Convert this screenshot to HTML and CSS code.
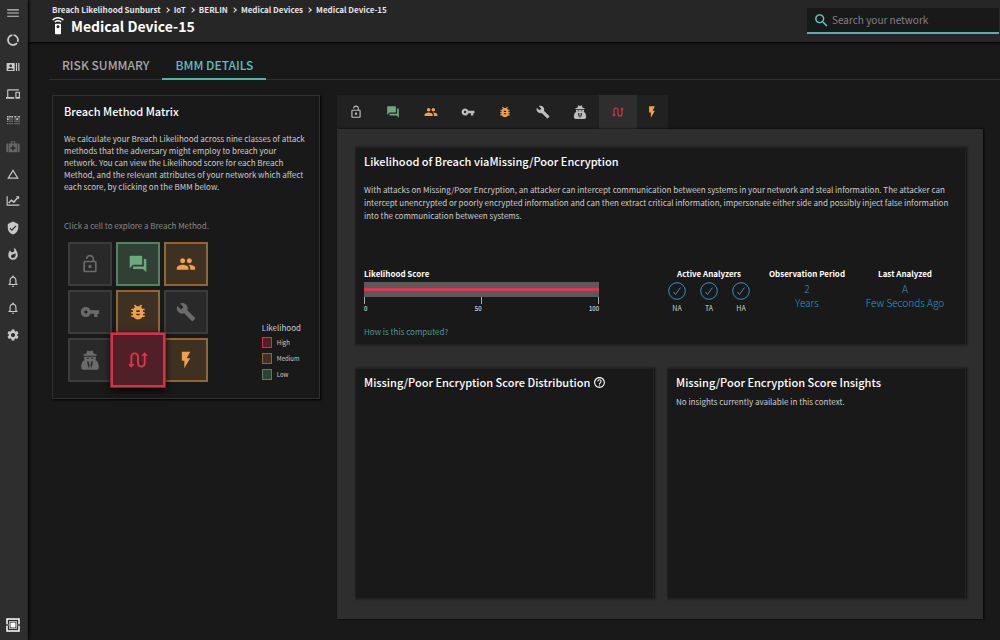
FILE: index.html
```html
<!DOCTYPE html>
<html lang="en">
<head>
    <meta charset="UTF-8">
    <meta name="viewport" content="width=device-width, initial-scale=1.0">
    <title>Medical Device-15</title>
    <link rel="stylesheet" href="styles.css">
</head>
<body>
    <!-- Icon set -->
    <svg class="sprite" aria-hidden="true">
        <symbol id="menu" viewBox="0 0 24 24"><path d="M2 18.500h20v-2H2v2zm0-5.500h20v-2H2v2zm0-7.500v2h20v-2H2z"/></symbol>
        <symbol id="usage" viewBox="0 0 24 24"><path d="M13 2.050v3.030c3.390.49 6 3.390 6 6.920 0 .9-.18 1.750-.48 2.540l2.600 1.530c.56-1.240.88-2.620.88-4.070 0-5.180-3.950-9.450-9-9.950zM12 19c-3.870 0-7-3.130-7-7 0-3.530 2.610-6.430 6-6.920V2.050c-5.060.5-9 4.760-9 9.950 0 5.520 4.470 10 9.990 10 3.310 0 6.240-1.610 8.060-4.090l-2.600-1.530C16.170 17.980 14.210 19 12 19z"/></symbol>
        <symbol id="actors" viewBox="0 0 24 24"><path d="M21 5v14h2V5h-2zm-4 14h2V5h-2v14zM14 5H2c-.55 0-1 .45-1 1v12c0 .55.45 1 1 1h12c.55 0 1-.45 1-1V6c0-.55-.45-1-1-1zM8 7.750c1.240 0 2.250 1.010 2.250 2.250S9.240 12.250 8 12.250 5.750 11.240 5.750 10 6.760 7.750 8 7.750zM12.500 17h-9v-.75c0-1.500 3-2.250 4.500-2.250s4.500.75 4.500 2.250V17z"/></symbol>
        <symbol id="devices" viewBox="0 0 24 24"><path d="M4 6h18V4H4c-1.100 0-2 .9-2 2v11H0v3h14v-3H4V6zm19 2h-6c-.55 0-1 .45-1 1v10c0 .55.45 1 1 1h6c.55 0 1-.45 1-1V9c0-.55-.45-1-1-1zm-1 9h-4v-7h4v7z"/></symbol>
        <symbol id="dots" viewBox="0 0 14 14">
            <path d="M1 3h1.600v1.600H1zM3.200 3h1.600v1.600H3.200zM5.400 3H7v1.600H5.400zM1 5.300h1.600v1.600H1zM8.300 3h1.600v1.600H8.300zM12.300 3h1.600v1.600h-1.600zM10.300 5.300h1.600v1.600h-1.600z"/>
            <path opacity=".5" d="M3.200 5.300h1.400v1.400H3.200zM5.400 5.300h1.400v1.400H5.400zM1 7.600h1.400V9H1zM3.200 7.600h1.400V9H3.200zM5.400 7.600h1.400V9H5.400zM1 9.900h1.400v1.400H1zM3.200 9.900h1.400v1.400H3.200zM5.400 9.900h1.400v1.400H5.400zM10.300 3h1.400v1.400h-1.400zM8.300 5.300h1.400v1.400H8.300zM12.300 5.300h1.400v1.400h-1.400zM8.300 7.600h1.400V9H8.300zM10.300 7.600h1.400V9h-1.400zM12.300 7.600h1.400V9h-1.400zM8.300 9.900h1.400v1.400H8.300zM10.300 9.900h1.400v1.400h-1.400zM12.300 9.900h1.400v1.400h-1.400z"/>
        </symbol>
        <symbol id="medkit" viewBox="0 0 24 24"><path fill-rule="evenodd" d="M8 6V3.500C8 2.700 8.700 2 9.500 2h5c.8 0 1.500.7 1.500 1.500V6h3v15H5V6h3zm2 0h4V4h-4v2zm.5 3.500v2.800H7.700v3h2.800v2.800h3v-2.800h2.800v-3h-2.800V9.500h-3zM2.500 6H4v15H2.500C1.200 21 .5 20 .5 19V8c0-1.100.9-2 2-2zM20 6h1.500c1.100 0 2 .9 2 2v11c0 1.100-.9 2-2 2H20V6z"/></symbol>
        <symbol id="triangle" viewBox="0 0 24 24"><path d="M12 7.770L18.390 18H5.610L12 7.770M12 4L2 20h20L12 4z"/></symbol>
        <symbol id="chart" viewBox="0 0 24 24"><path d="M1 4h2v14h20v2H1z"/><path fill="none" stroke="currentColor" stroke-width="2.500" d="M4.500 15.500l5-5 4 3.500 6.500-8"/><path d="M22.500 4v5.500L17 4z"/></symbol>
        <symbol id="shield" viewBox="0 0 24 24"><path d="M12 1L3 5v6c0 5.550 3.840 10.740 9 12 5.160-1.260 9-6.450 9-12V5l-9-4zm-2 16l-4-4 1.410-1.410L10 14.170l6.590-6.590L18 9l-8 8z"/></symbol>
        <symbol id="fire" viewBox="0 0 24 24"><path d="M13.500.67s.74 2.650.74 4.800c0 2.060-1.350 3.730-3.410 3.730-2.070 0-3.630-1.670-3.630-3.730l.03-.36C5.210 7.510 4 10.620 4 14c0 4.420 3.580 8 8 8s8-3.580 8-8C20 8.610 17.410 3.800 13.500.67zM11.710 19c-1.780 0-3.220-1.400-3.220-3.140 0-1.620 1.050-2.760 2.810-3.120 1.770-.36 3.600-1.210 4.620-2.580.39 1.290.59 2.650.59 4.040 0 2.650-2.150 4.800-4.800 4.800z"/></symbol>
        <symbol id="bell" viewBox="0 0 24 24"><path d="M12 22c1.100 0 2-.9 2-2h-4c0 1.100.9 2 2 2zm6-6v-5c0-3.070-1.630-5.640-4.500-6.320V4c0-.83-.67-1.500-1.500-1.500s-1.500.67-1.500 1.500v.68C7.640 5.360 6 7.920 6 11v5l-2 2v1h16v-1l-2-2zm-2 1H8v-6c0-2.480 1.510-4.500 4-4.500s4 2.020 4 4.500v6z"/></symbol>
        <symbol id="gear" viewBox="0 0 24 24"><path d="M19.140 12.940c.04-.3.060-.61.060-.94 0-.32-.02-.64-.07-.94l2.030-1.580c.18-.14.23-.41.120-.61l-1.920-3.320c-.12-.22-.37-.29-.59-.22l-2.390.96c-.5-.38-1.030-.7-1.620-.94l-.36-2.540c-.04-.24-.24-.41-.48-.41h-3.840c-.24 0-.43.17-.47.41l-.36 2.540c-.59.24-1.130.57-1.620.94l-2.390-.96c-.22-.08-.47 0-.59.22L2.740 8.870c-.12.21-.08.47.12.61l2.030 1.580c-.05.3-.09.63-.09.94s.02.64.07.94l-2.030 1.580c-.18.14-.23.41-.12.61l1.920 3.320c.12.22.37.29.59.22l2.390-.96c.5.38 1.030.7 1.620.94l.36 2.540c.05.24.24.41.48.41h3.840c.24 0 .44-.17.47-.41l.36-2.540c.59-.24 1.130-.56 1.620-.94l2.390.96c.22.08.47 0 .59-.22l1.920-3.320c.12-.22.07-.47-.12-.61l-2.010-1.580zM12 15.600c-1.980 0-3.600-1.620-3.600-3.600s1.620-3.600 3.600-3.600 3.600 1.620 3.600 3.600-1.620 3.600-3.600 3.600z"/></symbol>
        <symbol id="logo" viewBox="0 0 14 14"><path fill="none" stroke="currentColor" stroke-width="1.500" d="M1 6V1h12v5M1 8v5h12V8"/><path d="M3 3h8v8H3zM4 4v6h6V4z" fill-rule="evenodd" opacity=".6"/><path d="M4.500 4.500h5v5h-5z"/><path opacity=".5" d="M0 6.500h3v1H0zM11 6.500h3v1h-3z"/></symbol>
        <symbol id="remote" viewBox="0 0 24 24"><path d="M15 9H9c-.55 0-1 .45-1 1v12c0 .55.45 1 1 1h6c.55 0 1-.45 1-1V10c0-.55-.45-1-1-1zm-3 6c-1.100 0-2-.9-2-2s.9-2 2-2 2 .9 2 2-.9 2-2 2zM7.050 6.050l1.410 1.410C9.370 6.560 10.620 6 12 6s2.630.56 3.540 1.460l1.410-1.410C15.680 4.780 13.930 4 12 4s-3.680.78-4.950 2.050zM12 0C8.960 0 6.210 1.230 4.220 3.220l1.410 1.410C7.260 3.010 9.510 2 12 2s4.740 1.010 6.360 2.640l1.410-1.410C17.790 1.230 15.040 0 12 0z"/></symbol>
        <symbol id="search" viewBox="0 0 24 24"><path d="M15.500 14h-.79l-.28-.27C15.410 12.590 16 11.110 16 9.500 16 5.910 13.090 3 9.500 3S3 5.910 3 9.500 5.910 16 9.500 16c1.610 0 3.090-.59 4.230-1.570l.27.28v.79l5 4.990L20.490 19l-4.990-5zm-6 0C7.010 14 5 11.990 5 9.500S7.010 5 9.500 5 14 7.010 14 9.500 11.990 14 9.500 14z"/></symbol>
        <symbol id="lock" viewBox="0 0 24 24"><path d="M12 17c1.100 0 2-.9 2-2s-.9-2-2-2-2 .9-2 2 .9 2 2 2zm6-9h-1V6c0-2.760-2.240-5-5-5S7 3.240 7 6h1.900c0-1.710 1.390-3.100 3.100-3.100 1.710 0 3.100 1.390 3.100 3.100v2H6c-1.100 0-2 .9-2 2v10c0 1.100.9 2 2 2h12c1.100 0 2-.9 2-2V10c0-1.100-.9-2-2-2zm0 12H6V10h12v10z"/></symbol>
        <symbol id="forum" viewBox="0 0 24 24"><path d="M21 6h-2v9H6v2c0 .55.45 1 1 1h11l4 4V7c0-.55-.45-1-1-1zm-4 6V3c0-.55-.45-1-1-1H3c-.55 0-1 .45-1 1v14l4-4h10c.55 0 1-.45 1-1z"/></symbol>
        <symbol id="people" viewBox="0 0 24 24"><path d="M16 11c1.660 0 2.990-1.340 2.990-3S17.660 5 16 5c-1.660 0-3 1.340-3 3s1.340 3 3 3zm-8 0c1.660 0 2.990-1.340 2.990-3S9.660 5 8 5C6.340 5 5 6.340 5 8s1.340 3 3 3zm0 2c-2.330 0-7 1.170-7 3.500V19h14v-2.500c0-2.330-4.670-3.500-7-3.500zm8 0c-.29 0-.62.02-.97.05 1.160.84 1.970 1.970 1.970 3.450V19h6v-2.500c0-2.330-4.670-3.500-7-3.500z"/></symbol>
        <symbol id="key" viewBox="0 0 24 24"><path d="M12.650 10C11.830 7.670 9.610 6 7 6c-3.310 0-6 2.690-6 6s2.690 6 6 6c2.610 0 4.830-1.670 5.650-4H17v4h4v-4h2v-4H12.650zM7 14c-1.100 0-2-.9-2-2s.9-2 2-2 2 .9 2 2-.9 2-2 2z"/></symbol>
        <symbol id="bug" viewBox="0 0 24 24"><path d="M20 8h-2.810c-.45-.78-1.070-1.450-1.820-1.960L17 4.410 15.590 3l-2.170 2.170C12.960 5.060 12.490 5 12 5c-.49 0-.96.06-1.410.17L8.410 3 7 4.410l1.620 1.630C7.880 6.550 7.260 7.220 6.810 8H4v2h2.090c-.05.33-.09.66-.09 1v1H4v2h2v1c0 .34.04.67.09 1H4v2h2.810c1.040 1.790 2.970 3 5.190 3s4.150-1.210 5.190-3H20v-2h-2.090c.05-.33.09-.66.09-1v-1h2v-2h-2v-1c0-.34-.04-.67-.09-1H20V8zm-6 8h-4v-2h4v2zm0-4h-4v-2h4v2z"/></symbol>
        <symbol id="wrench" viewBox="0 0 24 24"><path d="M22.700 19l-9.100-9.100c.9-2.300.4-5-1.500-6.900-2-2-5-2.400-7.400-1.300L9 6 6 9 1.600 4.700C.4 7.100.9 10.100 2.900 12.100c1.900 1.900 4.600 2.400 6.900 1.500l9.100 9.100c.4.4 1 .4 1.400 0l2.300-2.300c.5-.4.5-1.100.1-1.400z"/></symbol>
        <symbol id="spy" viewBox="0 0 24 24"><path fill-rule="evenodd" d="M7.500 4.500L8.800.5 12 1.500l3.200-1 1.300 4L20 5.500V7H4V5.500l3.500-1zM5 8h14c.3 1.500 0 3-.8 4 2 .6 3 2 3.600 4 .7 2.300 1 4 .6 5.500-.4 1.500-1.400 2.300-3.100 2.300H4.700c-1.700 0-2.700-.8-3.100-2.300-.4-1.500-.1-3.200.6-5.500.6-2 1.600-3.400 3.600-4C5 11 4.700 9.500 5 8zm3 1.300v1.200h2.800V9.300H8zm5.200 0v1.200H16V9.300h-2.800zM8.500 13.500L9 17l2 5.500.4-5-.9-2 .7-1.500-2.700-.5zm7 0l-2.700.5.7 1.500-.9 2 .4 5L15 17l.5-3.500z"/></symbol>
        <symbol id="route" viewBox="0 0 24 24"><path fill="none" stroke="currentColor" stroke-width="2.200" d="M4 18V8a4 4 0 0 1 8 0v8a4 4 0 0 0 8 0V6"/><path d="M0 17h8l-4 4.200zM16 7h8l-4-4.200z"/></symbol>
        <symbol id="bolt" viewBox="0 0 24 24"><path d="M7 2v11h3v9l7-12h-4l4-8z"/></symbol>
        <symbol id="help" viewBox="0 0 24 24"><path d="M11 18h2v-2h-2v2zm1-16C6.480 2 2 6.480 2 12s4.480 10 10 10 10-4.480 10-10S17.520 2 12 2zm0 18c-4.410 0-8-3.590-8-8s3.590-8 8-8 8 3.590 8 8-3.590 8-8 8zm0-14c-2.210 0-4 1.790-4 4h2c0-1.100.9-2 2-2s2 .9 2 2c0 2-3 1.750-3 5h2c0-2.250 3-2.500 3-5 0-2.210-1.790-4-4-4z"/></symbol>
        <symbol id="check" viewBox="0 0 18 18"><circle cx="9" cy="9" r="8.300" fill="none" stroke="currentColor"/><path fill="none" stroke="currentColor" d="M5.500 10l2 2.500L12.500 5.500"/></symbol>
    </svg>

    <nav class="sidebar" aria-label="Main">
        <div class="sidebar-items">
            <button aria-label="Menu"><svg><use href="#menu"/></svg></button>
            <button aria-label="Overview"><svg><use href="#usage"/></svg></button>
            <button aria-label="Users"><svg><use href="#actors"/></svg></button>
            <button aria-label="Devices"><svg><use href="#devices"/></svg></button>
            <button aria-label="Matrix"><svg><use href="#dots"/></svg></button>
            <button class="dim" aria-label="Remediation"><svg><use href="#medkit"/></svg></button>
            <button aria-label="Risk"><svg><use href="#triangle"/></svg></button>
            <button aria-label="Trends"><svg><use href="#chart"/></svg></button>
            <button aria-label="Protection"><svg><use href="#shield"/></svg></button>
            <button aria-label="Threats"><svg><use href="#fire"/></svg></button>
            <button aria-label="Alerts"><svg><use href="#bell"/></svg></button>
            <button aria-label="Notifications"><svg><use href="#bell"/></svg></button>
            <button aria-label="Settings"><svg><use href="#gear"/></svg></button>
        </div>
        <button class="logo" aria-label="Home"><svg><use href="#logo"/></svg></button>
    </nav>

    <div class="page">
        <header class="header">
            <div>
                <nav class="breadcrumb" aria-label="Breadcrumb">
                    <a href="#">Breach Likelihood Sunburst</a><i></i><a href="#">IoT</a><i></i><a href="#">BERLIN</a><i></i><a href="#">Medical Devices</a><i></i><a href="#">Medical Device-15</a>
                </nav>
                <h1><svg><use href="#remote"/></svg>Medical Device-15</h1>
            </div>
            <label class="search">
                <svg><use href="#search"/></svg>
                <input type="text" placeholder="Search your network" aria-label="Search your network">
            </label>
        </header>

        <nav class="tabs">
            <a href="#">RISK SUMMARY</a>
            <a href="#" class="active">BMM DETAILS</a>
        </nav>

        <main class="content">
            <section class="panel matrix-panel">
                <h2>Breach Method Matrix</h2>
                <p class="intro">We calculate your Breach Likelihood across nine classes of attack methods that the adversary might employ to breach your network. You can view the Likelihood score for each Breach Method, and the relevant attributes of your network which affect each score, by clicking on the BMM below.</p>
                <p class="hint">Click a cell to explore a Breach Method.</p>
                <div class="matrix-row">
                    <div class="matrix">
                        <button class="cell" aria-label="Weak credentials"><svg><use href="#lock"/></svg></button>
                        <button class="cell low" aria-label="Phishing"><svg><use href="#forum"/></svg></button>
                        <button class="cell medium" aria-label="Trust relationship"><svg><use href="#people"/></svg></button>
                        <button class="cell" aria-label="Compromised credentials"><svg><use href="#key"/></svg></button>
                        <button class="cell medium" aria-label="Unpatched"><svg><use href="#bug"/></svg></button>
                        <button class="cell" aria-label="Misconfiguration"><svg><use href="#wrench"/></svg></button>
                        <button class="cell" aria-label="Malicious insider"><svg><use href="#spy"/></svg></button>
                        <button class="cell high selected" aria-label="Missing/Poor Encryption"><svg><use href="#route"/></svg></button>
                        <button class="cell medium" aria-label="Zero day"><svg><use href="#bolt"/></svg></button>
                    </div>
                    <div class="legend">
                        <h3>Likelihood</h3>
                        <ul>
                            <li><span class="swatch high"></span>High</li>
                            <li><span class="swatch medium"></span>Medium</li>
                            <li><span class="swatch low"></span>Low</li>
                        </ul>
                    </div>
                </div>
            </section>

            <div class="details">
                <div class="icon-tabs">
                    <button aria-label="Weak credentials"><svg><use href="#lock"/></svg></button>
                    <button class="green" aria-label="Phishing"><svg><use href="#forum"/></svg></button>
                    <button class="orange" aria-label="Trust relationship"><svg><use href="#people"/></svg></button>
                    <button aria-label="Compromised credentials"><svg><use href="#key"/></svg></button>
                    <button class="orange" aria-label="Unpatched"><svg><use href="#bug"/></svg></button>
                    <button aria-label="Misconfiguration"><svg><use href="#wrench"/></svg></button>
                    <button aria-label="Malicious insider"><svg><use href="#spy"/></svg></button>
                    <button class="red active" aria-label="Missing/Poor Encryption"><svg><use href="#route"/></svg></button>
                    <button class="orange last" aria-label="Zero day"><svg><use href="#bolt"/></svg></button>
                </div>
                <div class="details-body">
                    <section class="card summary">
                        <h2>Likelihood of Breach viaMissing/Poor Encryption</h2>
                        <p>With attacks on Missing/Poor Encryption, an attacker can intercept communication between systems in your network and steal information. The attacker can intercept unencrypted or poorly encrypted information and can then extract critical information, impersonate either side and possibly inject false information into the communication between systems.</p>
                        <div class="stats">
                            <div class="score">
                                <h3>Likelihood Score</h3>
                                <div class="bar"><span></span></div>
                                <div class="ticks"><span></span><span></span><span></span></div>
                                <div class="scale"><span>0</span><span>50</span><span>100</span></div>
                                <a href="#">How is this computed?</a>
                            </div>
                            <div class="stat analyzers">
                                <h3>Active Analyzers</h3>
                                <div class="checks">
                                    <span><svg><use href="#check"/></svg>NA</span>
                                    <span><svg><use href="#check"/></svg>TA</span>
                                    <span><svg><use href="#check"/></svg>HA</span>
                                </div>
                            </div>
                            <div class="stat">
                                <h3>Observation Period</h3>
                                <p class="value">2<br>Years</p>
                            </div>
                            <div class="stat">
                                <h3>Last Analyzed</h3>
                                <p class="value">A<br>Few Seconds Ago</p>
                            </div>
                        </div>
                    </section>
                    <div class="card-row">
                        <section class="card">
                            <h2>Missing/Poor Encryption Score Distribution <svg><use href="#help"/></svg></h2>
                        </section>
                        <section class="card">
                            <h2>Missing/Poor Encryption Score Insights</h2>
                            <p>No insights currently available in this context.</p>
                        </section>
                    </div>
                </div>
            </div>
        </main>
    </div>
</body>
</html>
```
FILE: styles.css
```css
* {
    box-sizing: border-box;
}

body {
    margin: 0;
    display: flex;
    min-height: 100vh;
    background: #191919;
    color: #fff;
    font-family: "Noto Sans CJK SC", "Open Sans", sans-serif;
    font-size: 8px;
    font-weight: 400;
}

h1, h2, h3, p, ul {
    margin: 0;
    padding: 0;
}

a {
    color: inherit;
    text-decoration: none;
}

button {
    display: flex;
    align-items: center;
    justify-content: center;
    padding: 0;
    border: none;
    background: none;
    color: inherit;
    cursor: pointer;
}

svg {
    fill: currentColor;
    flex-shrink: 0;
}

.sprite {
    position: absolute;
    width: 0;
    height: 0;
}

/* Sidebar */
.sidebar {
    display: flex;
    flex-direction: column;
    flex-shrink: 0;
    width: 28px;
    background: #2e2e2e;
    color: #c8c8c8;
    border-right: 1px solid #262626;
    box-shadow: 1px 0 3px #000;
    z-index: 1;
}

.sidebar-items {
    display: flex;
    flex-direction: column;
    height: 348px;
}

.sidebar button {
    flex: 1;
    padding-right: 1px;
}

.sidebar svg {
    width: 14px;
    height: 14px;
}

.sidebar .dim {
    color: #666;
}

.sidebar .logo {
    flex: 0 0 31px;
    margin-top: auto;
    color: #fff;
}

.page {
    flex: 1;
    min-width: 0;
    display: flex;
    flex-direction: column;
}

/* Header */
.header {
    display: flex;
    justify-content: space-between;
    padding: 3px 1px 0 24px;
    height: 42px;
    background: #262626;
    box-shadow: 0 1px 2px #000;
}

.breadcrumb {
    display: flex;
    align-items: center;
    font-size: 8px;
    font-weight: 700;
    line-height: 13px;
    color: #e4e4e4;
}

.breadcrumb i {
    width: 4px;
    height: 4px;
    margin: 0 5px 0 4px;
    border: solid #e4e4e4;
    border-width: 1px 1px 0 0;
    transform: rotate(45deg);
}

h1 {
    display: flex;
    align-items: center;
    gap: 4px;
    font-size: 14px;
    font-weight: 700;
    line-height: 20px;
}

h1 svg {
    width: 18px;
    height: 18px;
    margin-left: -3px;
}

.search {
    display: flex;
    align-items: center;
    gap: 1px;
    width: 192px;
    height: 26px;
    margin-top: 5px;
    padding-left: 6px;
    background: #191919;
    border-bottom: 2px solid #4fb3ad;
    color: #5ecbc6;
}

.search svg {
    width: 17px;
    height: 17px;
}

.search input {
    flex: 1;
    min-width: 0;
    height: 22px;
    padding: 0 1px 2px;
    border: none;
    outline: none;
    background: none;
    color: #fff;
    font: 400 10px "Noto Sans CJK SC", sans-serif;
}

.search input::placeholder {
    color: #828282;
}

/* Page tabs */
.tabs {
    display: flex;
    margin: 10px 0 15px 21px;
    border-bottom: 1px solid #303030;
    font-size: 12px;
    font-weight: 500;
    line-height: 26px;
    color: #a8a8a8;
}

.tabs a {
    padding: 0 13px;
    margin-bottom: -1px;
    border-bottom: 2px solid transparent;
}

.tabs .active {
    color: #5cc0ba;
    border-color: #4fb3ad;
}

.content {
    display: flex;
    align-items: flex-start;
    gap: 17px;
    padding: 0 17px 21px 24px;
    flex: 1;
}

h2 {
    font-size: 11px;
    font-weight: 500;
    line-height: 16px;
}

/* Matrix */
.panel {
    flex-shrink: 0;
    width: 268px;
    padding: 7px 9px 11px 11px;
    border: 1px solid #303030;
    box-shadow: 1px 1px 2px #000;
}

.intro {
    margin-top: 14px;
    line-height: 12px;
    color: #ccc;
}

.hint {
    margin-top: 26px;
    line-height: 14px;
    color: #888;
}

.matrix-row {
    display: flex;
    justify-content: space-between;
    align-items: flex-end;
    padding: 9px 9px 5px 4px;
}

.matrix {
    display: grid;
    grid-template-columns: repeat(3, 44px);
    grid-auto-rows: 44px;
    gap: 4px;
}

.cell {
    border: 2px solid #3c3c3c;
    background: #292929;
    color: #6b6b6b;
}

.cell svg {
    width: 20px;
    height: 20px;
}

.low {
    border-color: #528262;
    background: #304034;
    color: #6da87f;
}

.medium {
    border-color: #966632;
    background: #3f3122;
    color: #f0a04b;
}

.high {
    border-color: #d9304a;
    background: #502028;
    color: #e2364f;
}

.selected {
    transform: scale(1.25);
    box-shadow: 0 2px 6px #000;
}

.selected svg {
    width: 16px;
    height: 16px;
}

.legend h3 {
    font-size: 8px;
    font-weight: 400;
    line-height: 12px;
    color: #ccc;
}

.legend ul {
    list-style: none;
}

.legend li {
    display: flex;
    align-items: center;
    gap: 5px;
    height: 16px;
    font-size: 6px;
    color: #ccc;
}

.swatch {
    width: 10px;
    height: 11px;
    border-width: 1px;
    border-style: solid;
}

/* Details */
.details {
    flex: 1;
    min-width: 0;
    align-self: stretch;
    display: flex;
    flex-direction: column;
}

.icon-tabs {
    display: flex;
    align-self: flex-start;
    width: 331px;
    height: 34px;
    background: #212121;
    color: #bdbdbd;
}

.icon-tabs button {
    flex: 1;
}

.icon-tabs svg {
    width: 14px;
    height: 14px;
}

.icon-tabs .active {
    flex: 0 0 38px;
    background: #2e2e2e;
}

.icon-tabs .active svg {
    width: 12px;
    height: 12px;
}

.icon-tabs .last {
    flex: 0 0 31px;
}

.green {
    color: #6da87f;
}

.orange {
    color: #f0a04b;
}

.red {
    color: #e2364f;
}

.details-body {
    flex: 1;
    display: flex;
    flex-direction: column;
    gap: 23px;
    padding: 18px 17px 20px 18px;
    background: #2e2e2e;
    box-shadow: 1px 0 2px #000;
}

.card {
    padding: 5px 8px;
    background: #191919;
    border: 1px solid #222;
    box-shadow: 1px 0 2px #111;
}

.card p {
    color: #ccc;
}

.summary > p {
    margin-top: 14px;
    line-height: 13px;
}

.stats {
    display: flex;
    margin-top: 46px;
    padding-right: 3px;
}

.stats h3 {
    font-size: 8px;
    font-weight: 700;
    line-height: 12px;
}

.score {
    width: 235px;
    margin-right: auto;
}

.bar {
    display: flex;
    align-items: center;
    height: 15px;
    margin-top: 2px;
    background: #5a5a5a;
}

.bar span {
    width: 100%;
    height: 3px;
    background: #e2364f;
}

.ticks, .scale {
    display: flex;
    justify-content: space-between;
}

.ticks span {
    width: 1px;
    height: 7px;
    background: #aaa;
}

.scale {
    font-size: 6px;
    line-height: 9px;
}

.score a {
    display: block;
    margin-top: 12px;
    line-height: 14px;
    color: #4a9893;
}

.stat {
    width: 98px;
    text-align: center;
}

.card .value {
    margin-top: 2px;
    font-size: 10px;
    font-weight: 300;
    line-height: 14px;
    color: #2f9bcb;
}

.checks {
    display: flex;
    justify-content: center;
    gap: 14px;
    margin-top: 2px;
}

.checks span {
    display: flex;
    flex-direction: column;
    align-items: center;
    gap: 3px;
    width: 18px;
    font-size: 7px;
    line-height: 10px;
    color: #d0d0d0;
}

.checks svg {
    width: 18px;
    height: 18px;
    color: #3a8fc0;
}

.card-row {
    flex: 1;
    display: grid;
    grid-template-columns: 1fr 1fr;
    gap: 13px;
}

.card-row p {
    margin-top: 5px;
    line-height: 14px;
}

.card h2 svg {
    width: 13px;
    height: 13px;
    vertical-align: -2px;
}
```
